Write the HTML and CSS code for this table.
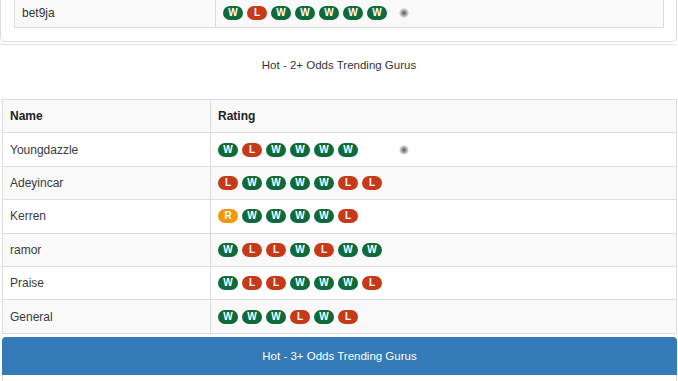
FILE: index.html
```html
<!DOCTYPE html>
<html>
<head>
<meta charset="utf-8">
<link rel="stylesheet" href="styles.css">
</head>
<body>
<div class="prev-panel">
  <table class="grid prev">
    <tr class="stripe">
      <td class="name-col">bet9ja</td>
      <td><div class="rating"><div class="badges short"><span class="b w">W</span><span class="b l">L</span><span class="b w">W</span><span class="b w">W</span><span class="b w">W</span><span class="b w">W</span><span class="b w">W</span></div><span class="dot"></span></div></td>
    </tr>
  </table>
</div>
<div class="divider"></div>
<div class="section-title">Hot - 2+ Odds Trending Gurus</div>
<table class="grid main">
  <tr class="stripe head">
    <th class="name-col">Name</th>
    <th>Rating</th>
  </tr>
  <tr>
    <td>Youngdazzle</td>
    <td><div class="rating"><div class="badges"><span class="b w">W</span><span class="b l">L</span><span class="b w">W</span><span class="b w">W</span><span class="b w">W</span><span class="b w">W</span></div><span class="dot"></span></div></td>
  </tr>
  <tr class="stripe">
    <td>Adeyincar</td>
    <td><div class="badges"><span class="b l">L</span><span class="b w">W</span><span class="b w">W</span><span class="b w">W</span><span class="b w">W</span><span class="b l">L</span><span class="b l">L</span></div></td>
  </tr>
  <tr>
    <td>Kerren</td>
    <td><div class="badges"><span class="b r">R</span><span class="b w">W</span><span class="b w">W</span><span class="b w">W</span><span class="b w">W</span><span class="b l">L</span></div></td>
  </tr>
  <tr class="stripe">
    <td>ramor</td>
    <td><div class="badges"><span class="b w">W</span><span class="b l">L</span><span class="b l">L</span><span class="b w">W</span><span class="b l">L</span><span class="b w">W</span><span class="b w">W</span></div></td>
  </tr>
  <tr>
    <td>Praise</td>
    <td><div class="badges"><span class="b w">W</span><span class="b l">L</span><span class="b l">L</span><span class="b w">W</span><span class="b w">W</span><span class="b w">W</span><span class="b l">L</span></div></td>
  </tr>
  <tr class="stripe">
    <td>General</td>
    <td><div class="badges"><span class="b w">W</span><span class="b w">W</span><span class="b w">W</span><span class="b l">L</span><span class="b w">W</span><span class="b l">L</span></div></td>
  </tr>
</table>
<div class="blue-panel">
  <div class="blue-head">Hot - 3+ Odds Trending Gurus</div>
  <div class="blue-body"></div>
</div>
</body>
</html>
```
FILE: styles.css
```css
html, body {
  margin: 0;
  padding: 0;
  background: #fff;
  font-family: "Liberation Sans", Arial, sans-serif;
  color: #333;
  overflow: hidden;
}

.prev-panel {
  border: 1px solid #ddd;
  border-top: none;
  border-radius: 0 0 5px 5px;
  padding: 0 12px 13px 13px;
  box-sizing: content-box;
  width: 650px;
}

.grid {
  border-collapse: collapse;
  font-size: 12px;
}

.grid td, .grid th {
  text-align: left;
  vertical-align: middle;
  padding: 0 7px;
  border-top: 1px solid #ddd;
  border-left: 1px solid #ddd;
}

.prev {
  width: 650px;
  border: 1px solid #ddd;
  border-top: none;
}

.prev td {
  height: 26px;
  border-top: none;
  padding-top: 0;
  padding-bottom: 1px;
}

.prev .name-col {
  width: 186px;
}

.stripe {
  background: #f9f9f9;
}

.divider {
  margin-top: 2px;
  width: 676px;
  height: 0;
  border-top: 1px solid #e3e3e3;
}

.section-title {
  text-align: center;
  font-size: 11.5px;
  line-height: 14px;
  padding-top: 13px;
  margin-bottom: 27px;
  color: #333;
}

.main {
  margin-left: 2px;
  width: 675px;
  border: 1px solid #ddd;
  border-top: none;
  table-layout: fixed;
}

.main td, .main th {
  height: 33.4px;
  box-sizing: border-box;
}

.main .name-col {
  width: 208px;
}

.main th {
  font-weight: bold;
  font-size: 12px;
  color: #222;
}

.main td {
  color: #3a3a3a;
}

.rating {
  display: flex;
  align-items: center;
}

.badges {
  display: flex;
  gap: 4px;
  width: 181px;
}

.badges.short {
  width: 176px;
}

.b {
  display: inline-flex;
  align-items: center;
  justify-content: center;
  width: 20px;
  height: 14px;
  border-radius: 7px;
  color: #fff;
  font-size: 10px;
  font-weight: bold;
  line-height: 1;
}

.w { background: #0f6a3b; }
.l { background: #c63a1c; }
.r { background: #f0960f; }

.dot {
  width: 10px;
  height: 10px;
  border-radius: 50%;
  background: radial-gradient(circle, rgba(60,60,70,0.85) 0%, rgba(90,90,100,0.5) 40%, rgba(255,255,255,0) 75%);
}

.blue-panel {
  margin: 3px 0 0 2px;
  width: 675px;
}

.blue-head {
  background: #337ab7;
  color: #fff;
  text-align: center;
  font-size: 11.5px;
  height: 38px;
  line-height: 38px;
  border-radius: 4px 4px 0 0;
}

.blue-body {
  height: 20px;
  border-left: 1px solid #ddd;
  border-right: 1px solid #ddd;
  background: #fff;
}
```
